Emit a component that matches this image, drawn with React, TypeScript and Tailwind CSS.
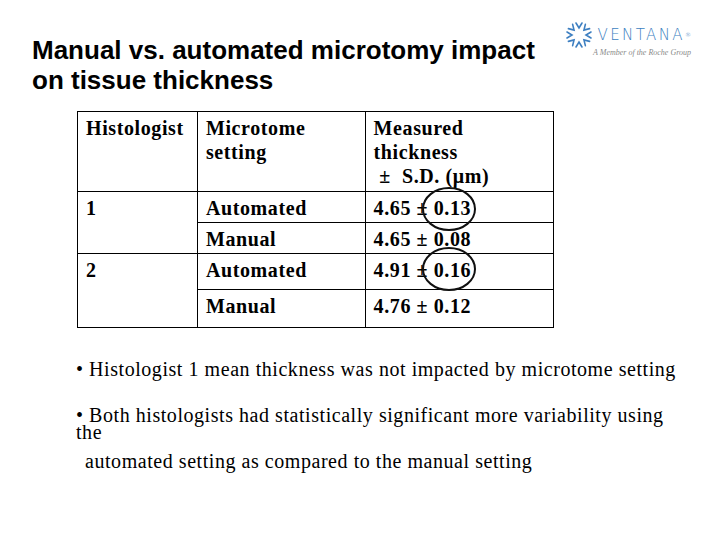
import React from 'react';

const serif = { fontFamily: '"Liberation Serif", "DejaVu Serif", serif' };

function VentanaLogo() {
  // starburst of little chevrons pointing to the centre
  const angles = [0, 45, 90, 135, 180, 225, 270, 315];
  return (
    <div className="flex flex-col items-end">
      <div className="flex items-center gap-1">
        <svg width="28" height="28" viewBox="-14 -14 28 28">
          {angles.map((a) => (
            <g key={a} transform={`rotate(${a})`}>
              <path d="M-3 -12 L0 -7 L3 -12" fill="none" stroke="#3d7fc1" strokeWidth="1.6" strokeLinecap="round" />
            </g>
          ))}
        </svg>
        <span
          className="text-[15px] tracking-[0.16em] text-[#3d7fc1]"
          style={{ fontFamily: '"DejaVu Sans", sans-serif', fontWeight: 300 }}
        >
          VENTANA<sup className="text-[6px] tracking-normal">®</sup>
        </span>
      </div>
      <span className="-mt-0.5 text-[8px] italic text-[#8a8a8a]" style={serif}>
        A Member of the Roche Group
      </span>
    </div>
  );
}

export default function App() {
  return (
    <div className="relative h-[540px] w-[720px] overflow-hidden bg-white">
      {/* Header */}
      <div className="flex items-start justify-between pl-8 pr-[29px] pt-[35px]">
        <h1
          className="text-[26px] font-bold leading-[30px] text-black"
          style={{ fontFamily: '"Liberation Sans", Arial, sans-serif' }}
        >
          Manual vs. automated microtomy impact
          <br />
          on tissue thickness
        </h1>
        <div className="-mt-[14px]">
          <VentanaLogo />
        </div>
      </div>

      {/* Table */}
      <div className="relative ml-[77px] mt-[16px] w-[477px]">
        <table
          className="w-full border-collapse text-[20px] font-bold leading-[24px] tracking-[0.6px] text-black"
          style={serif}
        >
          <colgroup>
            <col className="w-[120px]" />
            <col className="w-[168px]" />
            <col className="w-[189px]" />
          </colgroup>
          <tbody>
            <tr className="h-[80px]">
              <td className="border border-black px-2 pt-1 align-top">Histologist</td>
              <td className="border border-black px-2 pt-1 align-top">Microtome<br />setting</td>
              <td className="border border-black px-2 pt-1 align-top">Measured<br />thickness<br />&nbsp;± &nbsp;S.D. (μm)</td>
            </tr>
            <tr className="h-[31px]">
              <td rowSpan={2} className="border border-black px-2 pt-1 align-top">1</td>
              <td className="border border-black px-2 pt-1 align-top">Automated</td>
              <td className="border border-black px-2 pt-1 align-top">4.65 ± 0.13</td>
            </tr>
            <tr className="h-[31px]">
              <td className="border border-black px-2 pt-1 align-top">Manual</td>
              <td className="border border-black px-2 pt-1 align-top">4.65 ± 0.08</td>
            </tr>
            <tr className="h-[36px]">
              <td rowSpan={2} className="border border-black px-2 pt-1 align-top">2</td>
              <td className="border border-black px-2 pt-1 align-top">Automated</td>
              <td className="border border-black px-2 pt-1 align-top">4.91 ± 0.16</td>
            </tr>
            <tr className="h-[38px]">
              <td className="border border-black px-2 pt-1 align-top">Manual</td>
              <td className="border border-black px-2 pt-1 align-top">4.76 ± 0.12</td>
            </tr>
          </tbody>
        </table>

        {/* hand-drawn circles over the S.D. values */}
        <svg className="pointer-events-none absolute left-[344px] top-[75px]" width="56" height="46" viewBox="0 0 56 46">
          <ellipse cx="28" cy="23" rx="26" ry="21" fill="none" stroke="#111" strokeWidth="2" />
        </svg>
        <svg className="pointer-events-none absolute left-[344px] top-[135px]" width="56" height="46" viewBox="0 0 56 46">
          <ellipse cx="28" cy="23" rx="26" ry="21" fill="none" stroke="#111" strokeWidth="2" />
        </svg>
      </div>

      {/* Bullets */}
      <div className="ml-[76px] mt-[30px] text-[20px] tracking-[0.55px] text-black" style={serif}>
        <p className="leading-[22px]">• Histologist 1 mean thickness was not impacted by microtome setting</p>
        <p className="mt-[27px] leading-[17px]">
          • Both histologists had statistically significant more variability using
          <br />
          the
        </p>
        <p className="mt-[9px] pl-[9px] leading-[22px]">automated setting as compared to the manual setting</p>
      </div>
    </div>
  );
}
